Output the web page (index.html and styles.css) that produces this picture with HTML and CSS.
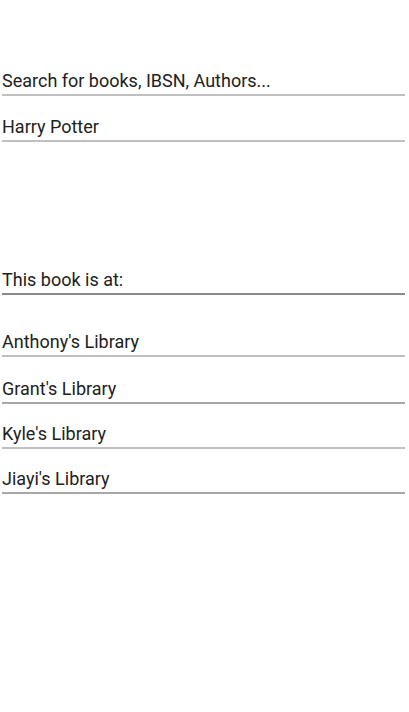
FILE: index.html
```html
<!DOCTYPE html>
<html>
<head>
<meta charset="utf-8">
<link rel="stylesheet" href="styles.css">
</head>
<body>
<main class="page">
  <section class="search">
    <div class="field field-input">Search for books, IBSN, Authors...</div>
    <div class="field field-input">Harry Potter</div>
  </section>
  <section class="results">
    <div class="field field-label">This book is at:</div>
    <ul class="libraries">
      <li class="field field-input">Anthony's Library</li>
      <li class="field field-solid">Grant's Library</li>
      <li class="field field-input">Kyle's Library</li>
      <li class="field field-solid">Jiayi's Library</li>
    </ul>
  </section>
</main>
</body>
</html>
```
FILE: styles.css
```css
html, body {
  margin: 0;
  padding: 0;
  background: #ffffff;
}
body {
  font-family: Roboto, "Liberation Sans", sans-serif;
  font-size: 18px;
  color: #212121;
}
.page {
  display: flex;
  flex-direction: column;
  padding: 0 4px 0 2px;
}
.search {
  display: flex;
  flex-direction: column;
  gap: 20px;
  margin-top: 70px;
}
.results {
  display: flex;
  flex-direction: column;
  margin-top: 127px;
}
.libraries {
  list-style: none;
  margin: 36px 0 0 0;
  padding: 0;
  display: flex;
  flex-direction: column;
  gap: 19px;
}
.libraries li:first-child {
  margin-bottom: 2px;
}
.field {
  height: 21px;
  line-height: 21px;
  padding-bottom: 3px;
  box-sizing: content-box;
  white-space: nowrap;
}
.field-input {
  border-bottom: 2px solid #c0c0c0;
}
.field-solid {
  border-bottom: 2px solid #a8a8a8;
}
.field-label {
  border-bottom: 2px solid #8a8a8a;
}
```
